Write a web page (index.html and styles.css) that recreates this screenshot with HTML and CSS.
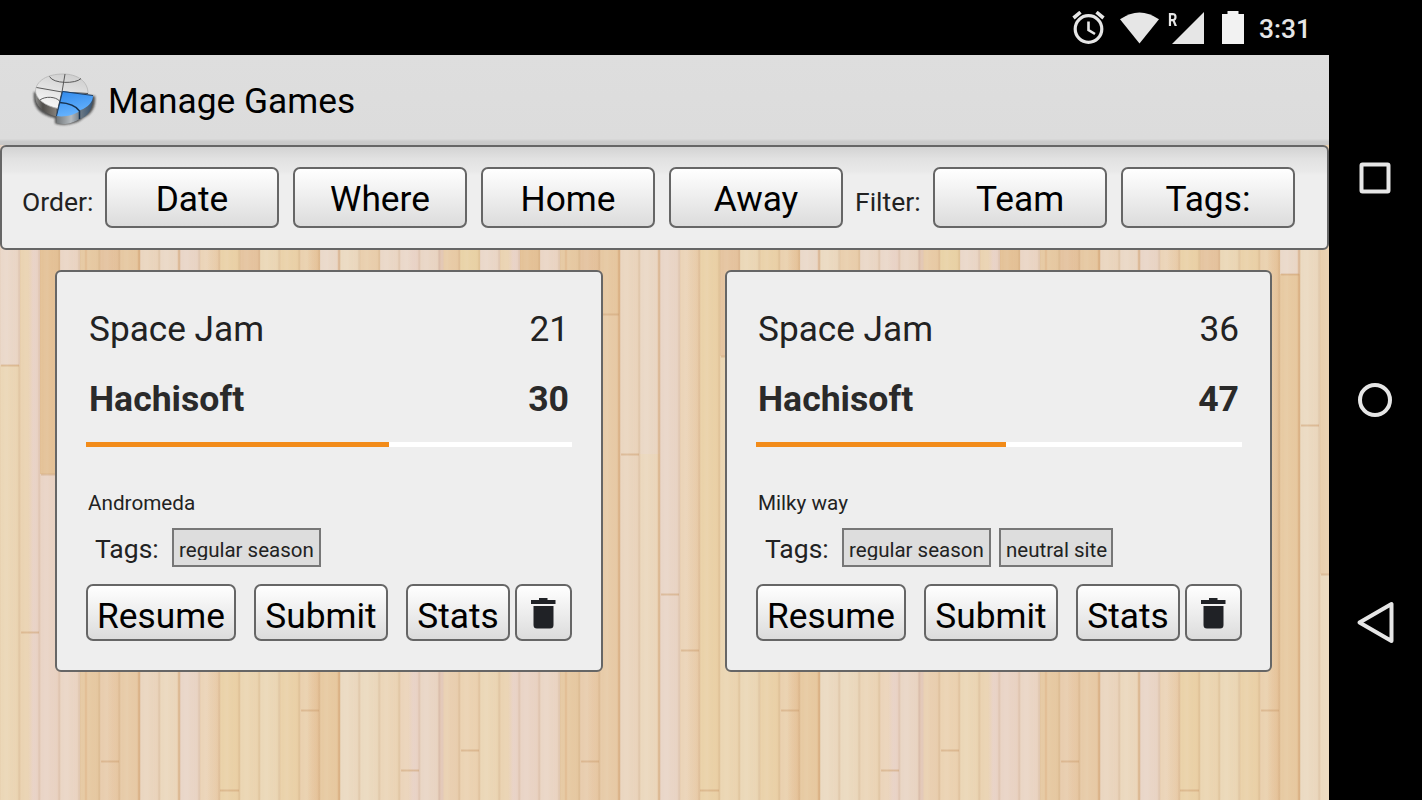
FILE: index.html
```html
<!DOCTYPE html>
<html lang="en">
<head>
    <meta charset="UTF-8">
    <meta name="viewport" content="width=device-width, initial-scale=1.0">
    <title>Manage Games</title>
    <link rel="stylesheet" href="styles.css">
</head>
<body>
    <div class="device">
        <div class="screen">
            <div class="status-bar">
                <svg class="alarm" width="34" height="34" viewBox="0 0 34 34" fill="none" stroke="#e6e6e6">
                    <circle cx="16.500" cy="18" r="13.300" stroke-width="3.200"/>
                    <path d="M16.500 10.500v8.500l6.500 4" stroke-width="2.600"/>
                    <path d="M1.500 7l7-5.800M31.500 7l-7-5.800" stroke-width="3.600"/>
                </svg>
                <svg class="wifi" width="40" height="32" viewBox="0 0 40 32" fill="#e6e6e6">
                    <path d="M0 7.300Q19.500-6.500 39 7.300L19.500 31.500z"/>
                </svg>
                <div class="signal">
                    <span>R</span>
                    <svg width="32" height="32" viewBox="0 0 32 32" fill="#e6e6e6"><path d="M32 0v32H0z"/></svg>
                </div>
                <svg class="battery" width="22" height="33" viewBox="0 0 22 33" fill="#f2f2f2">
                    <path d="M5.500 0h11v3H22v30H0V3h5.500z"/>
                </svg>
                <span class="clock">3:31</span>
            </div>

            <div class="app">
                <svg class="floor" width="1329" height="656" viewBox="0 144 1329 656">
                    <defs>
                        <linearGradient id="seam">
                            <stop offset="0" stop-color="#c08a58" stop-opacity=".12"/>
                            <stop offset=".12" stop-color="#fff" stop-opacity="0"/>
                            <stop offset=".35" stop-color="#fff" stop-opacity=".06"/>
                            <stop offset=".6" stop-color="#d9a066" stop-opacity=".02"/>
                            <stop offset=".86" stop-color="#d9a066" stop-opacity=".05"/>
                            <stop offset=".96" stop-color="#b08050" stop-opacity=".22"/>
                            <stop offset="1" stop-color="#c08a58" stop-opacity=".12"/>
                        </linearGradient>
                        <linearGradient id="fadePink">
                            <stop offset=".4" stop-color="#e9d5ca" stop-opacity="0"/>
                            <stop offset=".65" stop-color="#e9d5ca"/>
                        </linearGradient>
                        <linearGradient id="fadeTan">
                            <stop offset=".3" stop-color="#e5c39a" stop-opacity="0"/>
                            <stop offset=".9" stop-color="#e5c39a"/>
                        </linearGradient>
                        <pattern id="grain" width="20" height="900" patternUnits="userSpaceOnUse">
                            <rect width="20" height="900" fill="url(#seam)"/>
                        </pattern>
                        <pattern id="boards" width="480" height="900" patternUnits="userSpaceOnUse">
                            <!-- lower boards -->
                            <rect x="0" width="20" height="900" fill="#ebd7b7"/>
                            <rect x="20" width="20" height="900" fill="#ead3b2"/>
                            <rect x="40" width="20" height="900" fill="#e9d4c6"/>
                            <rect x="60" width="20" height="900" fill="#ead6c6"/>
                            <rect x="80" width="20" height="900" fill="#e6caa4"/>
                            <rect x="100" width="20" height="900" fill="#e8cdae"/>
                            <rect x="120" width="20" height="900" fill="#e7cba8"/>
                            <rect x="140" width="20" height="900" fill="#ead6c0"/>
                            <rect x="160" width="20" height="900" fill="#ebd8be"/>
                            <rect x="180" width="20" height="900" fill="#e9d6c8"/>
                            <rect x="200" width="20" height="900" fill="#ebd4b8"/>
                            <rect x="220" width="20" height="900" fill="#ead2a9"/>
                            <rect x="240" width="20" height="900" fill="#ebd6b3"/>
                            <rect x="260" width="20" height="900" fill="#ebd8b8"/>
                            <rect x="280" width="20" height="900" fill="#ead2aa"/>
                            <rect x="300" width="20" height="900" fill="#ead1af"/>
                            <rect x="320" width="20" height="900" fill="#e7caa2"/>
                            <rect x="340" width="20" height="900" fill="#ebdac2"/>
                            <rect x="360" width="20" height="900" fill="#ebdac0"/>
                            <rect x="380" width="20" height="900" fill="#ebd6b9"/>
                            <rect x="400" width="20" height="900" fill="#ebd4ba"/>
                            <rect x="420" width="20" height="900" fill="#e9d6c6"/>
                            <rect x="440" width="20" height="900" fill="#e9d0b2"/>
                            <rect x="460" width="20" height="900" fill="#ebd3b3"/>
                            <!-- upper boards -->
                            <rect x="0" width="20" height="365" fill="#ead8ca"/>
                            <rect x="40" width="20" height="474" fill="#e4c298"/>
                            <rect x="100" width="20" height="320" fill="#e4c3a0"/>
                            <rect x="120" width="20" height="314" fill="#e6c8a2"/>
                            <rect x="160" width="20" height="454" fill="#ead8c6"/>
                            <rect x="240" width="20" height="356" fill="#e5c4a0"/>
                            <rect x="320" width="20" height="274" fill="#ead9ca"/>
                            <rect x="360" width="20" height="574" fill="#e9cfae"/>
                            <rect x="380" width="20" height="400" fill="#ead8c8"/>
                            <rect x="400" width="20" height="400" fill="#ead8ca"/>
                            <rect x="440" width="20" height="400" fill="#e8cca8"/>
                            <rect x="460" width="20" height="400" fill="#e9d3a8"/>
                            <!-- tone changes inside a board -->
                            <rect x="20" width="20" height="900" fill="url(#fadePink)"/>
                            <rect x="400" width="20" height="900" fill="url(#fadePink)"/>
                            <rect x="100" width="20" height="900" fill="url(#fadeTan)" opacity=".4"/>
                            <rect x="200" width="20" height="900" fill="url(#fadeTan)" opacity=".4"/>
                            <rect x="300" width="20" height="900" fill="url(#fadeTan)" opacity=".9"/>
                            <path d="M86 0v900M139 0v900M179 0v900M339 0v900" stroke="#d9a878" stroke-width="2.500" opacity=".4"/>
                            <path d="M441 0v900" stroke="#dfc4be" stroke-width="5" opacity=".6"/>
                            <!-- board ends -->
                            <path d="M1 365.500h18M21 632.500h18M41 474.500h18M101 761.500h18M121 314.500h18M141 454.500h18M181 594.500h18M201 650.500h18M220 790.500h19M241 356.500h18M301 710.500h18M321 274.500h18M341 425.500h18M361 574.500h18M401 770.500h18M461 750.500h18" stroke="#cfa376" stroke-width="2" opacity=".55"/>
                        </pattern>
                    </defs>
                    <rect y="144" width="1329" height="656" fill="url(#boards)"/>
                    <rect y="144" width="1329" height="656" fill="url(#grain)"/>
                </svg>

                <div class="header">
                    <svg class="logo" width="66" height="58" viewBox="0 0 66 58">
                        <defs>
                            <linearGradient id="discSide">
                                <stop offset="0" stop-color="#8c8c8a"/>
                                <stop offset=".35" stop-color="#504e4b"/>
                                <stop offset="1" stop-color="#85817c"/>
                            </linearGradient>
                            <linearGradient id="discTop" x1=".6" y1="0" x2=".2" y2="1">
                                <stop offset="0" stop-color="#cfcfcf"/>
                                <stop offset=".55" stop-color="#e6e6e6"/>
                                <stop offset="1" stop-color="#fafafa"/>
                            </linearGradient>
                            <linearGradient id="sliceTop" x1="0" y1="0" x2=".3" y2="1">
                                <stop offset="0" stop-color="#2f88ea"/>
                                <stop offset="1" stop-color="#66b3ff"/>
                            </linearGradient>
                            <linearGradient id="sliceSide">
                                <stop offset="0" stop-color="#73787b"/>
                                <stop offset=".4" stop-color="#b4babf"/>
                                <stop offset=".66" stop-color="#6c7985"/>
                                <stop offset="1" stop-color="#33506f"/>
                            </linearGradient>
                            <filter id="soft" x="-20%" y="-20%" width="140%" height="140%"><feGaussianBlur stdDeviation="1.300"/></filter>
                        </defs>
                        <path d="M3 20C1 36 10 43 24 46V51.500C36 55 49 50 52 46C61 42 65 35 64 24Z" fill="#222" opacity=".75" filter="url(#soft)"/>
                        <path d="M4.500 19V27C6 36 15 42 25.500 44.500V36Z" fill="url(#discSide)"/>
                        <path d="M31 20L57 21.500C57 9 46 2 32 2C16 2 5 9 4.500 19C5 27 14 34 27 36.500Z" fill="url(#discTop)" stroke="#b5b5b5" stroke-width=".8"/>
                        <path d="M34 2L31 20L27 36.500M5.500 15.500L31 20L57 21.500M18.500 4.500C22 12 45 12 50 6.500M9 28C14 24 25 24.500 28.500 29" fill="none" stroke="#4a4a4a" stroke-width=".9"/>
                        <path d="M25.500 43V51C33 53.500 43 51 48.500 47C57 45 62 37 62 23.500L49 38Z" fill="url(#sliceSide)"/>
                        <path d="M31.500 19L62 23.500C62 30 57 35.500 49.500 38C45 43 33 45.500 25.500 44Z" fill="url(#sliceTop)"/>
                        <path d="M28.500 30.500C37 31 45 34 48.500 39V47" fill="none" stroke="#17324f" stroke-width="1.500"/>
                        <path d="M25.500 44L31.500 19.500L62 23.500" fill="none" stroke="#1d3c60" stroke-width="1"/>
                    </svg>
                    <h1>Manage Games</h1>
                </div>

                <div class="filter-bar">
                    <span class="bar-label order">Order:</span>
                    <button class="btn">Date</button>
                    <button class="btn">Where</button>
                    <button class="btn">Home</button>
                    <button class="btn">Away</button>
                    <span class="bar-label filter">Filter:</span>
                    <button class="btn">Team</button>
                    <button class="btn">Tags:</button>
                </div>

                <div class="games">
                    <div class="game-card">
                        <div class="team"><span>Space Jam</span><span>21</span></div>
                        <div class="team winner"><span>Hachisoft</span><span>30</span></div>
                        <div class="progress"><div class="progress-fill" style="width: 62.4%"></div></div>
                        <div class="place">Andromeda</div>
                        <div class="tags">
                            <span class="tags-label">Tags:</span>
                            <span class="tag"><span>regular season</span></span>
                        </div>
                        <div class="actions">
                            <button class="btn resume">Resume</button>
                            <button class="btn submit">Submit</button>
                            <button class="btn stats">Stats</button>
                            <button class="btn trash" aria-label="Delete">
                                <svg width="26" height="32" viewBox="0 0 26 32" fill="#202226"><path d="M0 3h8V1h8.500v2h8v4H0zM2.500 9h20v19q0 3.500-3.500 3.500H6q-3.500 0-3.500-3.500z"/></svg>
                            </button>
                        </div>
                    </div>

                    <div class="game-card last">
                        <div class="team"><span>Space Jam</span><span>36</span></div>
                        <div class="team winner"><span>Hachisoft</span><span>47</span></div>
                        <div class="progress"><div class="progress-fill" style="width: 51.5%"></div></div>
                        <div class="place">Milky way</div>
                        <div class="tags">
                            <span class="tags-label">Tags:</span>
                            <span class="tag"><span>regular season</span></span>
                            <span class="tag neutral"><span>neutral site</span></span>
                        </div>
                        <div class="actions">
                            <button class="btn resume">Resume</button>
                            <button class="btn submit">Submit</button>
                            <button class="btn stats">Stats</button>
                            <button class="btn trash" aria-label="Delete">
                                <svg width="26" height="32" viewBox="0 0 26 32" fill="#202226"><path d="M0 3h8V1h8.500v2h8v4H0zM2.500 9h20v19q0 3.500-3.500 3.500H6q-3.500 0-3.500-3.500z"/></svg>
                            </button>
                        </div>
                    </div>
                </div>
            </div>
        </div>

        <div class="nav-bar">
            <svg width="40" height="40" viewBox="0 0 40 40"><rect x="6.500" y="6.500" width="27" height="27" rx="1"/></svg>
            <svg width="40" height="40" viewBox="0 0 40 40"><circle cx="20" cy="20" r="15"/></svg>
            <svg width="40" height="46" viewBox="0 0 40 46"><path d="M36.500 4v37L4.500 22.500z"/></svg>
        </div>
    </div>
</body>
</html>
```
FILE: styles.css
```css
* {
    margin: 0;
    padding: 0;
    box-sizing: border-box;
}

body {
    font-family: Roboto, 'Liberation Sans', sans-serif;
    background: #000;
    overflow: hidden;
}

svg {
    display: block;
    flex: none;
}

.device {
    display: flex;
    width: 1422px;
    height: 800px;
}

.screen {
    width: 1329px;
    display: flex;
    flex-direction: column;
}

.status-bar {
    height: 55px;
    display: flex;
    align-items: flex-start;
    justify-content: flex-end;
    padding: 11px 19px 0 0;
    color: #e6e6e6;
}

.wifi {
    margin: 1px 0 0 14px;
}

.signal {
    display: flex;
    margin: 1px 0 0 8px;
}

.signal span {
    width: 4px;
    font-size: 18px;
    line-height: 15px;
    font-weight: bold;
    transform: scaleX(0.8);
    transform-origin: left;
}

.battery {
    margin-left: 18px;
}

.clock {
    width: 51px;
    margin-left: 15px;
    font-size: 26.4px;
    line-height: 37px;
    font-weight: 500;
}

.app {
    position: relative;
    flex: 1;
}

.floor {
    position: absolute;
    left: 0;
    bottom: 0;
    z-index: -1;
}

.header {
    height: 90px;
    display: flex;
    align-items: center;
    padding: 2px 0 0 31px;
    background: linear-gradient(#dedede, #dcdcdc 93%, #cbcbcb 96%, #c8c8c8);
}

.header h1 {
    margin-left: 11px;
    font-size: 35.3px;
    font-weight: normal;
    color: #000;
}

.filter-bar {
    height: 105px;
    display: flex;
    gap: 14px;
    padding: 20px 0 0 21px;
    border: 2px solid #666;
    border-radius: 6px;
    background: linear-gradient(#d3d3d3, #e2e2e2 12%, #e9e9e9 24%, #eee 28%);
}

.bar-label {
    font-size: 26.5px;
    line-height: 70px;
    color: #222;
}

.order {
    width: 68px;
    text-indent: -1px;
}

.filter {
    width: 64px;
    margin-left: -2px;
}

.btn {
    width: 174px;
    height: 61px;
    padding-top: 2px;
    border: 2px solid #666;
    border-radius: 7px;
    background: linear-gradient(#fff, #dcdcdc);
    font-family: inherit;
    font-size: 35.3px;
    color: #000;
    white-space: nowrap;
}

.games {
    display: flex;
    gap: 122px;
    padding: 20px 0 0 55px;
}

.game-card {
    width: 548px;
    height: 402px;
    padding: 22px 29px 0;
    border: 2px solid #666;
    border-radius: 6px;
    background: #eee;
    color: #222;
}

.game-card.last {
    width: 547px;
    padding-right: 28px;
}

.team {
    display: flex;
    justify-content: space-between;
    height: 70px;
    padding: 0 3px;
    font-size: 35.2px;
    line-height: 70px;
}

.last .team {
    padding-left: 2px;
}

.winner {
    font-size: 35.6px;
    font-weight: bold;
    color: #2a2a2a;
}

.progress {
    height: 5px;
    margin-top: 8px;
    background: #fff;
}

.progress-fill {
    height: 5px;
    background: #f28b19;
}

.place {
    margin-top: 44px;
    padding-left: 2px;
    font-size: 20.7px;
    line-height: 24px;
}

.tags {
    display: flex;
    margin-top: 13px;
    padding-left: 9px;
}

.tags-label {
    width: 77px;
    font-size: 26.5px;
    line-height: 42px;
}

.tag {
    width: 149px;
    height: 39px;
    padding: 7px 0 0 5px;
    border: 2px solid #777;
    background: #ddd;
    font-size: 20.5px;
    line-height: 26px;
    white-space: nowrap;
}

/* the tag text box is too short for its descenders */
.tag span {
    display: block;
    height: 23px;
    overflow: hidden;
}

.neutral {
    width: 114px;
    margin-left: 8px;
}

.actions {
    display: flex;
    margin-top: 14px;
}

.actions .btn {
    height: 57px;
    padding-top: 7px;
}

.actions .resume {
    width: 150px;
    margin-right: 18px;
}

.actions .submit {
    width: 134px;
    margin-right: 18px;
}

.actions .stats {
    width: 104px;
    margin-right: 5px;
}

.actions .trash {
    width: 57px;
    padding: 0 0 0 14px;
}

.nav-bar {
    width: 93px;
    display: flex;
    flex-direction: column;
    align-items: center;
    gap: 182px;
    padding: 158px 1px 0 0;
}

.nav-bar svg:last-child {
    margin-top: -2px;
}

.nav-bar svg {
    fill: none;
    stroke: #e6e6e6;
    stroke-width: 4px;
    stroke-linejoin: round;
}
```
